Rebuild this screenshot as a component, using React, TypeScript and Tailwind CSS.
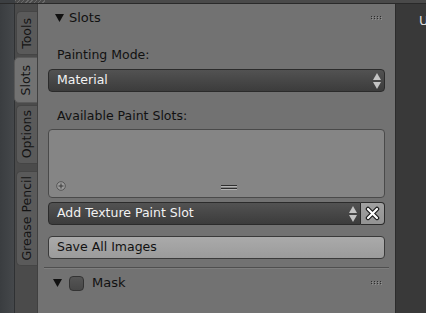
import React from "react";

function Grip() {
  return (
    <svg width="11" height="4" viewBox="0 0 11 4" className="block">
      {[0, 3, 6, 9].map((x) =>
        [0, 2].map((y) => (
          <g key={`${x}-${y}`}>
            <rect x={x} y={y} width="1" height="1" fill="#2e2e2e" />
            <rect x={x + 1} y={y + 1} width="1" height="1" fill="#8e8e8e" />
          </g>
        ))
      )}
    </svg>
  );
}

function Triangle() {
  return (
    <svg width="9" height="8" viewBox="0 0 9 8" className="block">
      <path d="M0 0 L9 0 L4.5 8 Z" fill="#111" />
    </svg>
  );
}

function UpDown() {
  return (
    <svg width="8" height="16" viewBox="0 0 8 16" className="block">
      <path d="M4 0 L8 7 L0 7 Z" fill="#c4c4c4" />
      <path d="M0 9 L8 9 L4 16 Z" fill="#c4c4c4" />
    </svg>
  );
}

function Tab({ label, h, active = false }: { label: string; h: string; active?: boolean }) {
  return (
    <div
      className={`${h} flex items-center justify-center rounded-l-[5px] border border-r-0 ${
        active ? "bg-[#727272] border-[#5a5a5a] w-[23px]" : "bg-[#5a5a5a] border-[#454545] w-[21px]"
      }`}
    >
      <span className="[writing-mode:vertical-rl] rotate-180 text-[12.5px] leading-none text-[#141414] whitespace-nowrap">
        {label}
      </span>
    </div>
  );
}

export default function App() {
  return (
    <div
      className="w-[426px] h-[313px] overflow-hidden flex flex-col bg-[#3a3a3a]"
      style={{ fontFamily: '"DejaVu Sans", sans-serif' }}
    >
      {/* top edge */}
      <div className="h-[4px] flex shrink-0 border-b border-[#2a2a2a]">
        <div className="w-[15px] bg-[#3c3f42]" />
        <div className="w-[30px] bg-[repeating-linear-gradient(135deg,#6a6a6a_0px,#6a6a6a_1px,#4a4a4a_1px,#4a4a4a_3px)]" />
        <div className="flex-1 bg-[#4a4a4a]" />
      </div>

      <div className="flex flex-1 min-h-0">
        {/* outer strip */}
        <div className="w-[15px] bg-gradient-to-r from-[#3a3d40] to-[#45484b] border-r border-[#2f3133]" />

        {/* tab column */}
        <div className="w-[23px] bg-[#4b4b4b] flex flex-col items-end pt-[7px] gap-[2px] border-r border-[#404040]">
          <Tab label="Tools" h="h-[44px]" />
          <Tab label="Slots" h="h-[46px]" active />
          <Tab label="Options" h="h-[59px]" />
          <div className="h-[3px]" />
          <Tab label="Grease Pencil" h="h-[95px]" />
        </div>

        {/* panel */}
        <div className="w-[357px] bg-[#727272] flex flex-col px-[10px] text-[12.5px] text-[#111]">
          <div className="h-[28px] flex items-center shrink-0">
            <div className="ml-[7px]">
              <Triangle />
            </div>
            <span className="ml-[5px] text-[13px]">Slots</span>
            <div className="ml-auto mr-[3px]">
              <Grip />
            </div>
          </div>

          <div className="mt-[12px] h-[22px] flex items-center pl-[9px] shrink-0">Painting Mode:</div>

          <div className="mt-[3px] h-[23px] shrink-0 rounded-[4px] border border-[#2b2b2b] bg-gradient-to-b from-[#525252] to-[#3c3c3c] flex items-center pl-[8px] pr-[3px] text-[#f2f2f2]">
            <span>Material</span>
            <div className="ml-auto">
              <UpDown />
            </div>
          </div>

          <div className="mt-[13px] h-[22px] flex items-center pl-[9px] shrink-0">Available Paint Slots:</div>

          <div className="mt-[2px] h-[69px] shrink-0 rounded-[4px] border border-[#4a4a4a] bg-[#858585] flex items-end pb-[6px] pl-[7px] relative">
            <svg width="10" height="10" viewBox="0 0 10 10" className="block">
              <circle cx="5" cy="5" r="4.3" fill="#9a9a9a" stroke="#555" strokeWidth="1" />
              <path d="M5 2.5 V7.5 M2.5 5 H7.5" stroke="#3a3a3a" strokeWidth="1" />
            </svg>
            <div className="absolute left-[172px] bottom-[7px]">
              <svg width="16" height="5" viewBox="0 0 16 5" className="block">
                <rect x="0" y="0" width="16" height="1" fill="#2f2f2f" />
                <rect x="0" y="1" width="16" height="1" fill="#b4b4b4" />
                <rect x="0" y="3" width="16" height="1" fill="#2f2f2f" />
                <rect x="0" y="4" width="16" height="1" fill="#b4b4b4" />
              </svg>
            </div>
          </div>

          <div className="mt-[4px] h-[23px] shrink-0 flex">
            <div className="flex-1 rounded-l-[4px] border border-[#2b2b2b] bg-gradient-to-b from-[#525252] to-[#3c3c3c] flex items-center pl-[8px] pr-[3px] text-[#f2f2f2]">
              <span>Add Texture Paint Slot</span>
              <div className="ml-auto">
                <UpDown />
              </div>
            </div>
            <div className="w-[24px] rounded-r-[4px] border border-l-0 border-[#2b2b2b] bg-gradient-to-b from-[#a0a0a0] to-[#939393] flex items-center justify-center">
              <svg width="15" height="15" viewBox="0 0 15 15" className="block">
                <path d="M3 3 L12 12 M12 3 L3 12" stroke="#1a1a1a" strokeWidth="4.5" strokeLinecap="round" />
                <path d="M3 3 L12 12 M12 3 L3 12" stroke="#ffffff" strokeWidth="2.2" strokeLinecap="round" />
              </svg>
            </div>
          </div>

          <div className="mt-[11px] h-[23px] shrink-0 rounded-[4px] border border-[#3a3a3a] bg-gradient-to-b from-[#aaaaaa] to-[#9b9b9b] flex items-center pl-[8px] text-[#111]">
            Save All Images
          </div>

          <div className="mt-[8px] mx-[-4px] h-[2px] shrink-0 border-t border-[#4f4f4f] border-b border-b-[#7e7e7e]" />

          <div className="mt-[3px] h-[22px] flex items-center shrink-0">
            <div className="ml-[5px]">
              <Triangle />
            </div>
            <div className="ml-[7px] w-[15px] h-[15px] rounded-[4px] border border-[#333] bg-gradient-to-b from-[#555] to-[#474747]" />
            <span className="ml-[8px] text-[13px]">Mask</span>
            <div className="ml-auto mr-[3px]">
              <Grip />
            </div>
          </div>
        </div>

        {/* right region */}
        <div className="flex-1 bg-[#393939] border-l border-[#2c2c2c] pl-[23px] pt-[7px] text-[13px] text-[#dcdcdc] overflow-hidden">
          U
        </div>
      </div>
    </div>
  );
}
